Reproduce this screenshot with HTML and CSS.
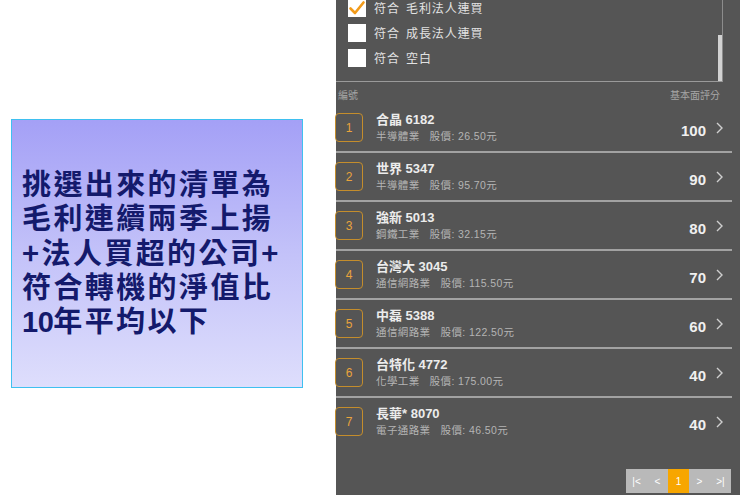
FILE: index.html
```html
<!DOCTYPE html>
<html lang="zh-Hant">
<head>
<meta charset="utf-8">
<title>選股清單</title>
<link rel="stylesheet" href="styles.css">
</head>
<body>
<div class="page">
  <div class="left">
    <div class="note">
      <p>挑選出來的清單為<br>毛利連續兩季上揚<br>+法人買超的公司+<br>符合轉機的淨值比<br><span class="num">10</span>年平均以下</p>
    </div>
  </div>
  <div class="panel">
    <div class="filters">
      <div class="filter-items">
        <div class="filter">
          <span class="box checked"><svg viewBox="0 0 18 18" width="18" height="18"><path d="M2.5 9.5 L7 14 L15.5 3.5" fill="none" stroke="#f29b1a" stroke-width="2.6" stroke-linecap="round" stroke-linejoin="round"/></svg></span>
          <span class="flabel">符合 毛利法人連買</span>
        </div>
        <div class="filter">
          <span class="box"></span>
          <span class="flabel">符合 成長法人連買</span>
        </div>
        <div class="filter">
          <span class="box"></span>
          <span class="flabel">符合 空白</span>
        </div>
      </div>
      <div class="thumb"></div>
    </div>
    <div class="head">
      <span>編號</span>
      <span>基本面評分</span>
    </div>
    <div class="rows">
      <div class="row">
        <span class="badge">1</span>
        <div class="info"><div class="name">合晶 6182</div><div class="sub"><span class="ind">半導體業</span>股價: 26.50元</div></div>
        <span class="score">100</span>
        <svg class="chev" viewBox="0 0 7 12" width="7" height="12"><path d="M1 1 L6 6 L1 11" fill="none" stroke="#cfcfcf" stroke-width="1.4"/></svg>
      </div>
      <div class="row">
        <span class="badge">2</span>
        <div class="info"><div class="name">世界 5347</div><div class="sub"><span class="ind">半導體業</span>股價: 95.70元</div></div>
        <span class="score">90</span>
        <svg class="chev" viewBox="0 0 7 12" width="7" height="12"><path d="M1 1 L6 6 L1 11" fill="none" stroke="#cfcfcf" stroke-width="1.4"/></svg>
      </div>
      <div class="row">
        <span class="badge">3</span>
        <div class="info"><div class="name">強新 5013</div><div class="sub"><span class="ind">鋼鐵工業</span>股價: 32.15元</div></div>
        <span class="score">80</span>
        <svg class="chev" viewBox="0 0 7 12" width="7" height="12"><path d="M1 1 L6 6 L1 11" fill="none" stroke="#cfcfcf" stroke-width="1.4"/></svg>
      </div>
      <div class="row">
        <span class="badge">4</span>
        <div class="info"><div class="name">台灣大 3045</div><div class="sub"><span class="ind">通信網路業</span>股價: 115.50元</div></div>
        <span class="score">70</span>
        <svg class="chev" viewBox="0 0 7 12" width="7" height="12"><path d="M1 1 L6 6 L1 11" fill="none" stroke="#cfcfcf" stroke-width="1.4"/></svg>
      </div>
      <div class="row">
        <span class="badge">5</span>
        <div class="info"><div class="name">中磊 5388</div><div class="sub"><span class="ind">通信網路業</span>股價: 122.50元</div></div>
        <span class="score">60</span>
        <svg class="chev" viewBox="0 0 7 12" width="7" height="12"><path d="M1 1 L6 6 L1 11" fill="none" stroke="#cfcfcf" stroke-width="1.4"/></svg>
      </div>
      <div class="row">
        <span class="badge">6</span>
        <div class="info"><div class="name">台特化 4772</div><div class="sub"><span class="ind">化學工業</span>股價: 175.00元</div></div>
        <span class="score">40</span>
        <svg class="chev" viewBox="0 0 7 12" width="7" height="12"><path d="M1 1 L6 6 L1 11" fill="none" stroke="#cfcfcf" stroke-width="1.4"/></svg>
      </div>
      <div class="row last">
        <span class="badge">7</span>
        <div class="info"><div class="name">長華* 8070</div><div class="sub"><span class="ind">電子通路業</span>股價: 46.50元</div></div>
        <span class="score">40</span>
        <svg class="chev" viewBox="0 0 7 12" width="7" height="12"><path d="M1 1 L6 6 L1 11" fill="none" stroke="#cfcfcf" stroke-width="1.4"/></svg>
      </div>
    </div>
    <div class="pager">
      <span class="pg">|&lt;</span>
      <span class="pg">&lt;</span>
      <span class="pg active">1</span>
      <span class="pg">&gt;</span>
      <span class="pg">&gt;|</span>
    </div>
  </div>
</div>
</body>
</html>
```

FILE: styles.css
```css
html, body {
  margin: 0;
  padding: 0;
  background: #ffffff;
}

.page {
  display: flex;
  width: 740px;
  height: 495px;
  overflow: hidden;
  font-family: "Liberation Sans", "Noto Sans CJK TC", sans-serif;
}

.left {
  width: 336px;
  flex: none;
}

.note {
  box-sizing: border-box;
  margin: 119px 0 0 11px;
  width: 292px;
  height: 269px;
  border: 1px solid #3fc0f0;
  background: linear-gradient(#a4a0f6 0%, #c3c2f9 50%, #dedefc 100%);
  padding: 45px 0 0 10px;
}

.note p {
  margin: 0;
  font-family: "Noto Sans CJK TC", sans-serif;
  font-weight: 700;
  font-size: 29px;
  line-height: 34.3px;
  letter-spacing: 2.4px;
  color: #141a6c;
  white-space: nowrap;
}

.note .num {
  font-family: "Liberation Sans", sans-serif;
  font-weight: 700;
  letter-spacing: -0.5px;
  font-size: 29px;
}

.panel {
  width: 404px;
  height: 495px;
  background: #555555;
  display: flex;
  flex-direction: column;
}

.filters {
  position: relative;
  box-sizing: border-box;
  width: 387px;
  height: 82px;
  border-right: 1px solid #8c8c8c;
  border-bottom: 1px solid #9a9a9a;
  overflow: hidden;
}

.filter-items {
  margin-top: -5px;
}

.filter {
  display: flex;
  align-items: center;
  height: 25px;
  padding-left: 12px;
}

.box {
  width: 18px;
  height: 18px;
  background: #ffffff;
  flex: none;
  display: flex;
}

.flabel {
  margin-left: 8px;
  font-size: 12px;
  letter-spacing: 0.9px;
  word-spacing: 2px;
  color: #e2e2e2;
}

.thumb {
  position: absolute;
  right: 0;
  bottom: 0;
  width: 4px;
  height: 46px;
  background: #d2d2d2;
}

.head {
  display: flex;
  justify-content: space-between;
  height: 22px;
  box-sizing: border-box;
  padding: 8px 20px 0 2px;
  font-size: 10px;
  line-height: 12px;
  color: #a6a6a6;
}

.rows {
  width: 396px;
}

.row {
  display: flex;
  align-items: center;
  height: 47px;
  border-bottom: 2px solid #a2a2a2;
  padding-right: 9px;
}

.row.last {
  border-bottom: none;
}

.badge {
  box-sizing: border-box;
  width: 28px;
  height: 29px;
  margin-left: -1px;
  border: 1.5px solid #c48d2c;
  border-radius: 4px;
  display: flex;
  align-items: center;
  justify-content: center;
  font-size: 12px;
  color: #e9a33c;
  flex: none;
}

.info {
  margin-left: 13px;
  flex: 1;
}

.name {
  font-size: 13px;
  line-height: 16px;
  font-weight: 600;
  color: #ececec;
}

.sub {
  font-size: 10.5px;
  line-height: 16px;
  color: #b4b4b4;
  letter-spacing: 0.4px;
}

.ind {
  margin-right: 10px;
}

.score {
  font-size: 15px;
  font-weight: 700;
  color: #f0f0f0;
  padding-top: 6px;
}

.chev {
  margin-left: 10px;
  flex: none;
}

.pager {
  display: flex;
  align-self: flex-end;
  margin: 24px 9px 0 0;
  background: #b9b9b9;
  height: 24px;
}

.pg {
  width: 21px;
  display: flex;
  align-items: center;
  justify-content: center;
  font-size: 10px;
  color: #ffffff;
}

.pg.active {
  background: #f7a600;
}
```
